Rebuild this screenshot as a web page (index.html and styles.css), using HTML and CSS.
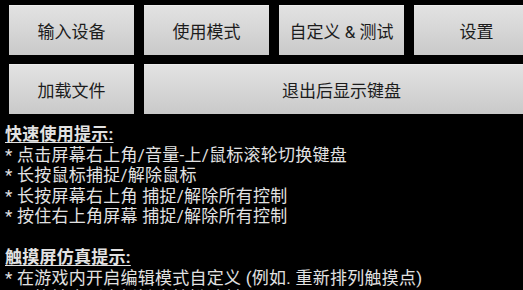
FILE: index.html
```html
<!DOCTYPE html>
<html lang="zh">
<head>
<meta charset="utf-8">
<title>设置</title>
<link rel="stylesheet" href="styles.css">
</head>
<body>
<div class="page">
  <div class="buttons">
    <div class="btn">输入设备</div>
    <div class="btn">使用模式</div>
    <div class="btn">自定义 &amp; 测试</div>
    <div class="btn">设置</div>
    <div class="btn">加载文件</div>
    <div class="btn wide">退出后显示键盘</div>
  </div>
  <div class="tips">
    <div class="head">快速使用提示:</div>
    <div class="line">* 点击屏幕右上角/音量-上/鼠标滚轮切换键盘</div>
    <div class="line">* 长按鼠标捕捉/解除鼠标</div>
    <div class="line">* 长按屏幕右上角 捕捉/解除所有控制</div>
    <div class="line">* 按住右上角屏幕 捕捉/解除所有控制</div>
    <div class="line blank">&nbsp;</div>
    <div class="head">触摸屏仿真提示:</div>
    <div class="line">* 在游戏内开启编辑模式自定义 (例如. 重新排列触摸点)</div>
    <div class="line">* 切换输出到虚拟键盘按键映射</div>
  </div>
</div>
</body>
</html>
```
FILE: styles.css
```css
html, body {
  margin: 0;
  padding: 0;
  background: #000;
  overflow: hidden;
}
.page {
  width: 560px;
  font-family: "Roboto", "Noto Sans CJK SC", sans-serif;
}
.buttons {
  display: grid;
  grid-template-columns: repeat(4, 125px);
  grid-auto-rows: 50px;
  column-gap: 10px;
  row-gap: 9px;
  padding: 5px 0 0 9px;
}
.btn {
  display: flex;
  align-items: center;
  justify-content: center;
  background: linear-gradient(#e2e2e2, #d6d6d6 50%, #c9c9c9);
  border-top: 1px solid #ececec;
  box-sizing: border-box;
  color: #1c1c1c;
  font-size: 17px;
}
.btn.wide {
  grid-column: span 3;
}
.tips {
  margin-top: 10px;
  padding-left: 5px;
  color: #e2e2e2;
  font-size: 17px;
  line-height: 20.5px;
  letter-spacing: 0.25px;
  white-space: nowrap;
}
.head {
  font-weight: bold;
  text-decoration: underline;
  text-underline-offset: 2px;
}
```
